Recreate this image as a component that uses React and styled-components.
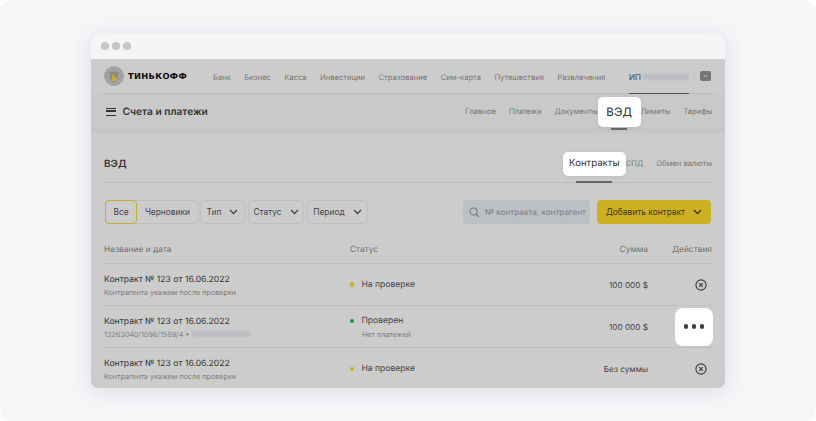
import React from "react";
import styled, { createGlobalStyle } from "styled-components";

const GlobalStyle = createGlobalStyle`
  html, body {
    margin: 0;
    background: #ffffff;
    font-family: Inter, "Liberation Sans", sans-serif;
    text-rendering: geometricPrecision;
  }
  * { box-sizing: border-box; }
`;

const Page = styled.div`
  width: 816px;
  height: 421px;
  padding: 33px 91px 0;
  overflow: hidden;
  border-radius: 12px;
  background: #f5f6f8;
`;

const Window = styled.div`
  width: 634px;
  height: 355px;
  border-radius: 7px;
  overflow: hidden;
  background: #cccccc;
  box-shadow: 0 4px 20px rgba(60, 70, 90, 0.13);
  display: flex;
  flex-direction: column;
`;

const TitleBar = styled.div`
  height: 26px;
  flex: none;
  background: #f6f5f5;
  display: flex;
  align-items: center;
  gap: 3.5px;
  padding-left: 10px;
`;

const WinDot = styled.span`
  width: 7.5px;
  height: 7.5px;
  border-radius: 50%;
  background: #c6c6c6;
`;

const TopNav = styled.div`
  height: 35px;
  flex: none;
  margin: 0 13px;
  display: flex;
  align-items: center;
  border-bottom: 1px solid #bcbcbc;
`;

const Logo = styled.div`
  display: flex;
  align-items: center;
  gap: 4px;
  width: 109px;
  flex: none;
`;

const LogoText = styled.span`
  font-family: "DejaVu Sans", sans-serif;
  font-weight: 700;
  font-size: 8.3px;
  letter-spacing: 0.35px;
  color: #0c0c0c;
`;

const NavLinks = styled.nav`
  display: flex;
  gap: 13.5px;
  flex: 1;
  margin-top: 2px;
`;

const NavLink = styled.span`
  font-size: 7.6px;
  color: #777777;
  white-space: nowrap;
`;

const Account = styled.div`
  position: relative;
  display: flex;
  align-items: center;
  align-self: stretch;
  gap: 2px;
  width: 60px;
  padding-top: 1px;
  font-size: 8px;
  color: #333333;
  &::after {
    content: "";
    position: absolute;
    left: 0;
    right: 0;
    bottom: -1px;
    height: 1px;
    background: #555555;
  }
`;

const Blurred = styled.span`
  display: inline-block;
  width: ${(p) => p.$w}px;
  height: 6px;
  background: #bcbdc2;
  filter: blur(1.2px);
`;

const AccountMenu = styled.div`
  margin-left: 5px;
  margin-right: 1px;
  padding-left: 5px;
  border-left: 1px solid #c0c0c0;
  height: 13px;
  display: flex;
  align-items: center;
`;

const MenuIcon = styled.span`
  width: 11px;
  height: 10px;
  border-radius: 2px;
  background: #747474;
  display: flex;
  align-items: center;
  justify-content: center;
`;

const SubNav = styled.div`
  height: 35px;
  flex: none;
  padding: 0 13px 0 15px;
  display: flex;
  align-items: center;
  background: #c9c9c9;
  box-shadow: 0 2px 5px rgba(0, 0, 0, 0.07);
`;

const Burger = styled.span`
  width: 10px;
  height: 8px;
  margin-right: 6.5px;
  border-top: 1.4px solid #333333;
  border-bottom: 1.4px solid #333333;
  position: relative;
  &::after {
    content: "";
    position: absolute;
    left: 0;
    right: 0;
    top: 1.9px;
    height: 1.4px;
    background: #333333;
  }
`;

const SubTitle = styled.div`
  font-size: 10.2px;
  font-weight: 600;
  color: #333333;
  flex: 1;
`;

const Tabs = styled.div`
  display: flex;
  align-items: center;
  gap: 13px;
`;

const Tab = styled.span`
  font-size: 7.6px;
  color: #777777;
  white-space: nowrap;
`;

const Highlight = styled.span`
  position: relative;
  z-index: 2;
  display: flex;
  align-items: center;
  justify-content: center;
  background: #ffffff;
  border-radius: 5px;
  color: #333333;
  box-shadow: 0 1px 4px rgba(0, 0, 0, 0.08);
  font-size: ${(p) => p.$size}px;
  width: ${(p) => p.$w}px;
  height: ${(p) => p.$h}px;
  &::after {
    content: "";
    position: absolute;
    left: 50%;
    bottom: ${(p) => p.$under}px;
    width: ${(p) => p.$line}px;
    height: 2px;
    transform: translateX(-50%);
    background: #666666;
  }
`;

const VedTab = styled(Highlight)`
  margin: 0 -13px;
`;

const ContractsTab = styled(Highlight)`
  margin-right: -13px;
`;

const Content = styled.div`
  flex: 1;
  padding: 0 13px;
  display: flex;
  flex-direction: column;
`;

const SectionHead = styled.div`
  height: 41px;
  margin-top: 13px;
  padding-top: 3px;
  flex: none;
  display: flex;
  align-items: center;
  justify-content: space-between;
  border-bottom: 1px solid #bdbdbd;
`;

const SectionTitle = styled.div`
  font-size: 10px;
  font-weight: 600;
  color: #333333;
`;

const Filters = styled.div`
  display: flex;
  align-items: center;
  height: 24px;
  margin-top: 17px;
  flex: none;
`;

const FilterGroup = styled.div`
  display: flex;
  height: 24px;
  width: 94px;
  margin-left: 1px;
  margin-right: 1px;
  border: 1px solid #c0c0c0;
  border-radius: 4px;
`;

const FilterActive = styled.button`
  width: 32px;
  margin: -1px 0 -1px -1px;
  padding: 0;
  border: 1px solid #c9ad2a;
  border-radius: 4px;
  background: transparent;
  font: inherit;
  font-size: 8.4px;
  color: #444444;
`;

const FilterPlain = styled.button`
  flex: 1;
  padding: 0;
  border: 0;
  background: transparent;
  font: inherit;
  font-size: 8.4px;
  color: #444444;
`;

const Select = styled.button`
  width: ${(p) => p.$w}px;
  height: 24px;
  margin-right: 3px;
  padding: 0;
  border: 1px solid #c0c0c0;
  border-radius: 4px;
  background: transparent;
  font: inherit;
  font-size: 8.4px;
  color: #444444;
  display: flex;
  align-items: center;
  justify-content: center;
  gap: 8px;
`;

const Search = styled.div`
  width: 127px;
  height: 24px;
  margin-left: auto;
  padding-left: 6px;
  border-radius: 4px;
  background: #bcbfc4;
  display: flex;
  align-items: center;
  gap: 5px;
  font-size: 8.2px;
  color: #7b7d82;
  white-space: nowrap;
`;

const AddButton = styled.button`
  width: 114px;
  height: 24px;
  margin-left: 7px;
  margin-right: 1px;
  padding: 0;
  border: 0;
  border-radius: 4px;
  background: #cdb021;
  font: inherit;
  font-size: 8.4px;
  color: #3a3520;
  display: flex;
  align-items: center;
  justify-content: center;
  gap: 8px;
`;

const Row = styled.div`
  display: grid;
  grid-template-columns: 246px 1fr 74px 64px;
  align-items: center;
  height: 42px;
  flex: none;
  border-bottom: 1px solid #bfbfbf;
  &:last-child {
    border-bottom: 0;
  }
`;

const HeadRow = styled(Row)`
  height: 23px;
  margin-top: 17px;
  padding-bottom: 4px;
  font-size: 8.4px;
  color: #6f6f6f;
`;

const RightCell = styled.div`
  text-align: right;
  white-space: nowrap;
`;

const NameCell = styled.div`
  padding-top: 2px;
`;

const Name = styled.div`
  font-size: 8.6px;
  color: #333333;
  margin-bottom: 3px;
`;

const Sub = styled.div`
  font-size: 7.2px;
  color: #7c7c7c;
  display: flex;
  align-items: center;
  gap: 3px;
`;

const StatusLine = styled.div`
  display: flex;
  align-items: center;
  gap: 7px;
  font-size: 8.6px;
  color: #444444;
`;

const StatusDot = styled.span`
  width: 4.4px;
  height: 4.4px;
  border-radius: 50%;
  background: ${(p) => p.$color};
`;

const StatusSub = styled(Sub)`
  margin: 4px 0 0 12px;
`;

const Amount = styled(RightCell)`
  font-size: 8.2px;
  color: #444444;
`;

const ActionCell = styled.div`
  display: flex;
  justify-content: flex-end;
  padding-right: 5px;
`;

const MoreCell = styled.div`
  display: flex;
  justify-content: flex-end;
  margin-right: -1px;
`;

const MoreButton = styled.div`
  width: 38px;
  height: 38px;
  border-radius: 8px;
  background: #ffffff;
  display: flex;
  align-items: center;
  justify-content: center;
  gap: 3.5px;
`;

const MoreDot = styled.span`
  width: 4.4px;
  height: 4.4px;
  border-radius: 50%;
  background: #3c3c3c;
`;

const Chevron = ({ color = "#444444" }) => (
  <svg width="9" height="6" viewBox="0 0 9 6" fill="none">
    <path d="M1 1l3.500 3.500L8 1" stroke={color} strokeWidth="1.3" />
  </svg>
);

const CloseIcon = () => (
  <svg width="12" height="12" viewBox="0 0 12 12" fill="none">
    <circle cx="6" cy="6" r="5.100" stroke="#3c3c3c" strokeWidth="1.100" />
    <path d="M4.200 4.200l3.600 3.600M7.800 4.200L4.200 7.800" stroke="#3c3c3c" strokeWidth="1.100" />
  </svg>
);

const LogoMark = () => (
  <svg width="20" height="20" viewBox="0 0 20 20">
    <circle cx="10" cy="10" r="9" fill="#a6a6a6" />
    <circle cx="10" cy="10" r="9.200" fill="none" stroke="#777777" strokeWidth="1.200" strokeDasharray="1 1" />
    <circle cx="10" cy="10" r="6.500" fill="none" stroke="#8a8a8a" strokeWidth="0.800" strokeDasharray="1.500 1" />
    <path d="M5.500 5.500h9v5.800c0 2.200-2.400 3.800-4.500 4.700-2.100-.9-4.500-2.500-4.500-4.700z" fill="#8c8c8c" />
    <path d="M8 8h1.500v3h2c1.200 0 1.800.8 1.800 1.800S12.400 15 11 15H8z" fill="#c7ab25" />
  </svg>
);

const SearchIcon = () => (
  <svg width="11" height="11" viewBox="0 0 11 11" fill="none">
    <circle cx="4.500" cy="4.500" r="3.500" stroke="#7b7d82" strokeWidth="1.100" />
    <path d="M7 7l3 3" stroke="#7b7d82" strokeWidth="1.200" />
  </svg>
);

const navItems = ["Банк", "Бизнес", "Касса", "Инвестиции", "Страхование", "Сим-карта", "Путешествия", "Развлечения"];

export default function App() {
  return (
    <Page>
      <GlobalStyle />
      <Window>
        <TitleBar>
          <WinDot />
          <WinDot />
          <WinDot />
        </TitleBar>
        <TopNav>
          <Logo>
            <LogoMark />
            <LogoText>ТИНЬКОФФ</LogoText>
          </Logo>
          <NavLinks>
            {navItems.map((item) => (
              <NavLink key={item}>{item}</NavLink>
            ))}
          </NavLinks>
          <Account>
            ИП <Blurred $w={46} />
          </Account>
          <AccountMenu>
            <MenuIcon>
              <svg width="5" height="4" viewBox="0 0 5 4" fill="none">
                <path d="M.5 .8l2 2 2-2" stroke="#d8d8d8" strokeWidth="1" />
              </svg>
            </MenuIcon>
          </AccountMenu>
        </TopNav>
        <SubNav>
          <Burger />
          <SubTitle>Счета и платежи</SubTitle>
          <Tabs>
            <Tab>Главное</Tab>
            <Tab>Платежи</Tab>
            <Tab>Документы</Tab>
            <VedTab $size={11.6} $w={43} $h={30} $under={-3} $line={16}>
              ВЭД
            </VedTab>
            <Tab>Лимиты</Tab>
            <Tab>Тарифы</Tab>
          </Tabs>
        </SubNav>
        <Content>
          <SectionHead>
            <SectionTitle>ВЭД</SectionTitle>
            <Tabs>
              <ContractsTab $size={9.6} $w={63} $h={24} $under={-7} $line={36}>
                Контракты
              </ContractsTab>
              <Tab>СПД</Tab>
              <Tab>Обмен валюты</Tab>
            </Tabs>
          </SectionHead>
          <Filters>
            <FilterGroup>
              <FilterActive>Все</FilterActive>
              <FilterPlain>Черновики</FilterPlain>
            </FilterGroup>
            <Select $w={45}>
              Тип <Chevron />
            </Select>
            <Select $w={56}>
              Статус <Chevron />
            </Select>
            <Select $w={61}>
              Период <Chevron />
            </Select>
            <Search>
              <SearchIcon />№ контракта, контрагент
            </Search>
            <AddButton>
              Добавить контракт <Chevron color="#3a3520" />
            </AddButton>
          </Filters>
          <HeadRow>
            <div>Название и дата</div>
            <div>Статус</div>
            <RightCell>Сумма</RightCell>
            <RightCell>Действия</RightCell>
          </HeadRow>
          <Row>
            <NameCell>
              <Name>Контракт № 123 от 16.06.2022</Name>
              <Sub>Контрагента укажем после проверки</Sub>
            </NameCell>
            <StatusLine>
              <StatusDot $color="#cdb021" />
              На проверке
            </StatusLine>
            <Amount>100 000 $</Amount>
            <ActionCell>
              <CloseIcon />
            </ActionCell>
          </Row>
          <Row>
            <NameCell>
              <Name>Контракт № 123 от 16.06.2022</Name>
              <Sub>
                13263040/1098/1589/4 • <Blurred $w={58} />
              </Sub>
            </NameCell>
            <NameCell>
              <StatusLine>
                <StatusDot $color="#1f9d3a" />
                Проверен
              </StatusLine>
              <StatusSub>Нет платежей</StatusSub>
            </NameCell>
            <Amount>100 000 $</Amount>
            <MoreCell>
              <MoreButton>
                <MoreDot />
                <MoreDot />
                <MoreDot />
              </MoreButton>
            </MoreCell>
          </Row>
          <Row>
            <NameCell>
              <Name>Контракт № 123 от 16.06.2022</Name>
              <Sub>Контрагента укажем после проверки</Sub>
            </NameCell>
            <StatusLine>
              <StatusDot $color="#cdb021" />
              На проверке
            </StatusLine>
            <Amount>Без суммы</Amount>
            <ActionCell>
              <CloseIcon />
            </ActionCell>
          </Row>
        </Content>
      </Window>
    </Page>
  );
}
